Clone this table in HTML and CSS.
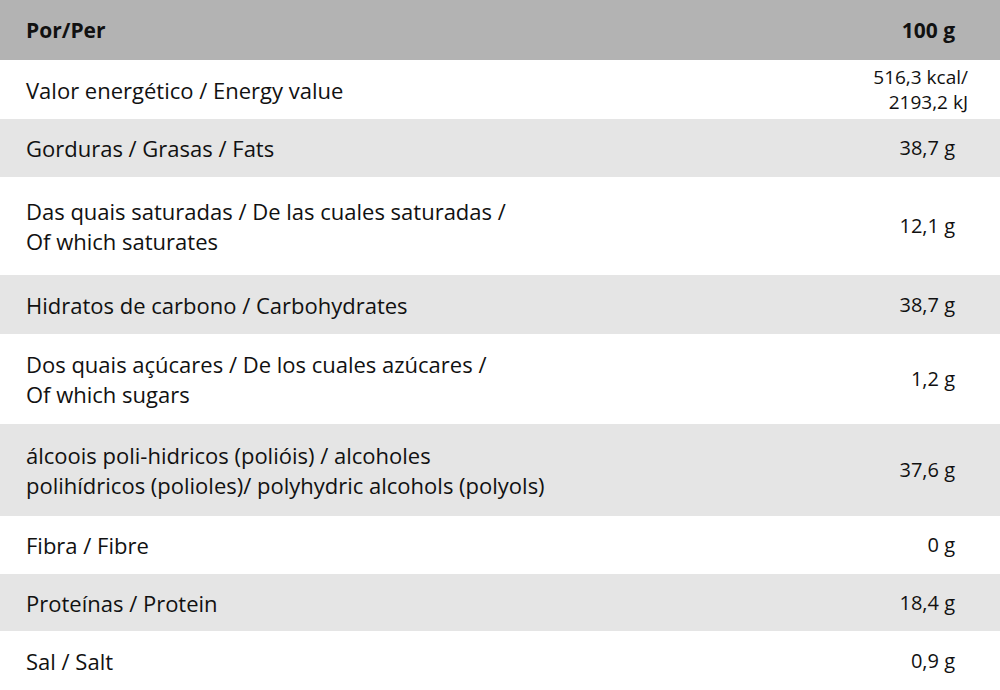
FILE: index.html
```html
<!DOCTYPE html>
<html lang="pt">
<head>
<meta charset="utf-8">
<title>Nutrition</title>
<link rel="stylesheet" href="styles.css">
</head>
<body>
<div class="table">
  <div class="row head h60"><div class="name">Por/Per</div><div class="val">100 g</div></div>
  <div class="row h59"><div class="name">Valor energético / Energy value</div><div class="val energy"><span>516,3 kcal/</span><span>2193,2 kJ</span></div></div>
  <div class="row alt h58"><div class="name">Gorduras / Grasas / Fats</div><div class="val">38,7 g</div></div>
  <div class="row h98"><div class="name">Das quais saturadas / De las cuales saturadas /<br>Of which saturates</div><div class="val">12,1 g</div></div>
  <div class="row alt h59"><div class="name">Hidratos de carbono / Carbohydrates</div><div class="val">38,7 g</div></div>
  <div class="row h90"><div class="name">Dos quais açúcares / De los cuales azúcares /<br>Of which sugars</div><div class="val">1,2 g</div></div>
  <div class="row alt h92"><div class="name">álcoois poli-hidricos (polióis) / alcoholes<br>polihídricos (polioles)/ polyhydric alcohols (polyols)</div><div class="val">37,6 g</div></div>
  <div class="row h58"><div class="name">Fibra / Fibre</div><div class="val">0 g</div></div>
  <div class="row alt h57"><div class="name">Proteínas / Protein</div><div class="val">18,4 g</div></div>
  <div class="row h59"><div class="name">Sal / Salt</div><div class="val">0,9 g</div></div>
</div>
</body>
</html>
```
FILE: styles.css
```css
html, body {
  margin: 0;
  padding: 0;
  background: #ffffff;
}
body {
  font-family: "Open Sans", "Noto Sans", sans-serif;
  font-size: 22px;
  color: #111111;
}
.table {
  display: flex;
  flex-direction: column;
  width: 1000px;
}
.row {
  display: flex;
  align-items: center;
  justify-content: space-between;
  padding: 0 45px 0 26px;
  background: #ffffff;
}
.row.alt { background: #e5e5e5; }
.row.head { background: #b3b3b3; font-weight: 700; }
.h57 { height: 57px; }
.h58 { height: 58px; }
.h59 { height: 59px; }
.h60 { height: 60px; }
.h90 { height: 90px; }
.h92 { height: 92px; }
.h98 { height: 98px; }
.name { line-height: 30px; }
.head .name { font-size: 21px; }
.val {
  text-align: right;
  line-height: 30px;
  white-space: nowrap;
  font-size: 20px;
}
.head .val { font-size: 21px; }
.energy {
  display: flex;
  flex-direction: column;
  align-items: flex-end;
  line-height: 25px;
  margin-right: -13px;
  font-size: 19px;
}
```
